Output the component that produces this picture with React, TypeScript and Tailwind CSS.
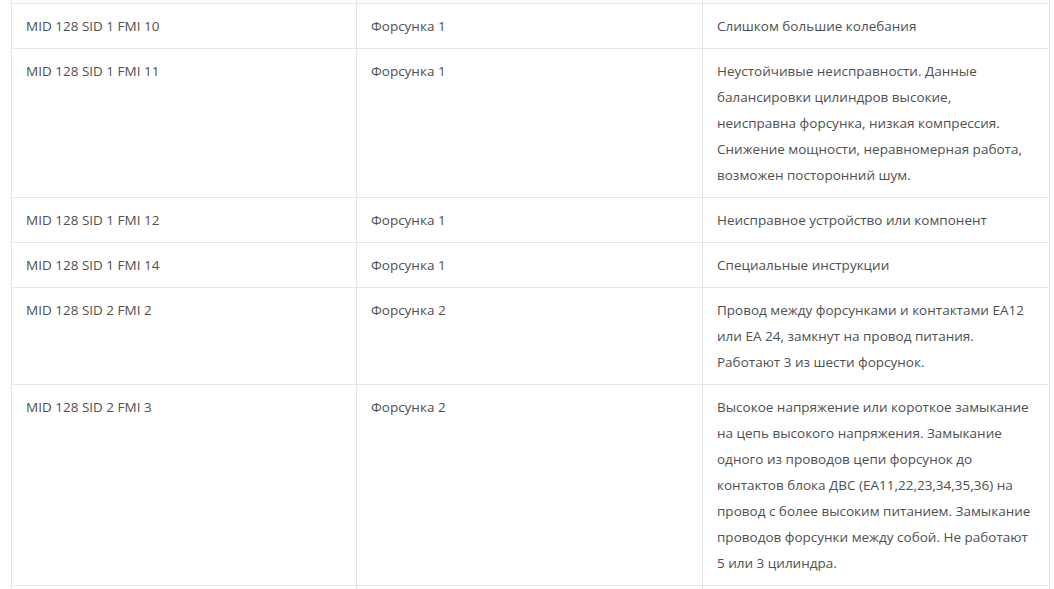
import React from "react";

const rows: [string, string, string[]][] = [
  ["", "", [""]],
  ["MID 128 SID 1 FMI 10", "Форсунка 1", ["Слишком большие колебания"]],
  [
    "MID 128 SID 1 FMI 11",
    "Форсунка 1",
    [
      "Неустойчивые неисправности. Данные",
      "балансировки цилиндров высокие,",
      "неисправна форсунка, низкая компрессия.",
      "Снижение мощности, неравномерная работа,",
      "возможен посторонний шум.",
    ],
  ],
  ["MID 128 SID 1 FMI 12", "Форсунка 1", ["Неисправное устройство или компонент"]],
  ["MID 128 SID 1 FMI 14", "Форсунка 1", ["Специальные инструкции"]],
  [
    "MID 128 SID 2 FMI 2",
    "Форсунка 2",
    [
      "Провод между форсунками и контактами EA12",
      "или EA 24, замкнут на провод питания.",
      "Работают 3 из шести форсунок.",
    ],
  ],
  [
    "MID 128 SID 2 FMI 3",
    "Форсунка 2",
    [
      "Высокое напряжение или короткое замыкание",
      "на цепь высокого напряжения. Замыкание",
      "одного из проводов цепи форсунок до",
      "контактов блока ДВС (EA11,22,23,34,35,36) на",
      "провод с более высоким питанием. Замыкание",
      "проводов форсунки между собой. Не работают",
      "5 или 3 цилиндра.",
    ],
  ],
  ["", "", [""]],
];

export default function App() {
  return (
    <div className="w-[1054px] h-[589px] overflow-hidden bg-white">
      <table
        className="ml-[11px] mt-[-42px] w-[1038px] table-fixed border-collapse text-[13.5px] leading-[26px] text-[#505050]"
        style={{ fontFamily: '"Open Sans", "Noto Sans", sans-serif' }}
      >
        <colgroup>
          <col className="w-[345px]" />
          <col className="w-[346px]" />
          <col className="w-[347px]" />
        </colgroup>
        <tbody>
          {rows.map((r, i) => (
            <tr key={i} className={i === 0 ? "h-[45px]" : ""}>
              <td className="border border-[#e6e6e6] px-[14px] pt-[9px] pb-[9px] align-top">
                {r[0]}
              </td>
              <td className="border border-[#e6e6e6] px-[14px] pt-[9px] pb-[9px] align-top">
                {r[1]}
              </td>
              <td className="border border-[#e6e6e6] px-[14px] pt-[9px] pb-[9px] align-top">
                {r[2].map((l, k) => (
                  <span key={k} className="block whitespace-nowrap">
                    {l}
                  </span>
                ))}
              </td>
            </tr>
          ))}
        </tbody>
      </table>
    </div>
  );
}
